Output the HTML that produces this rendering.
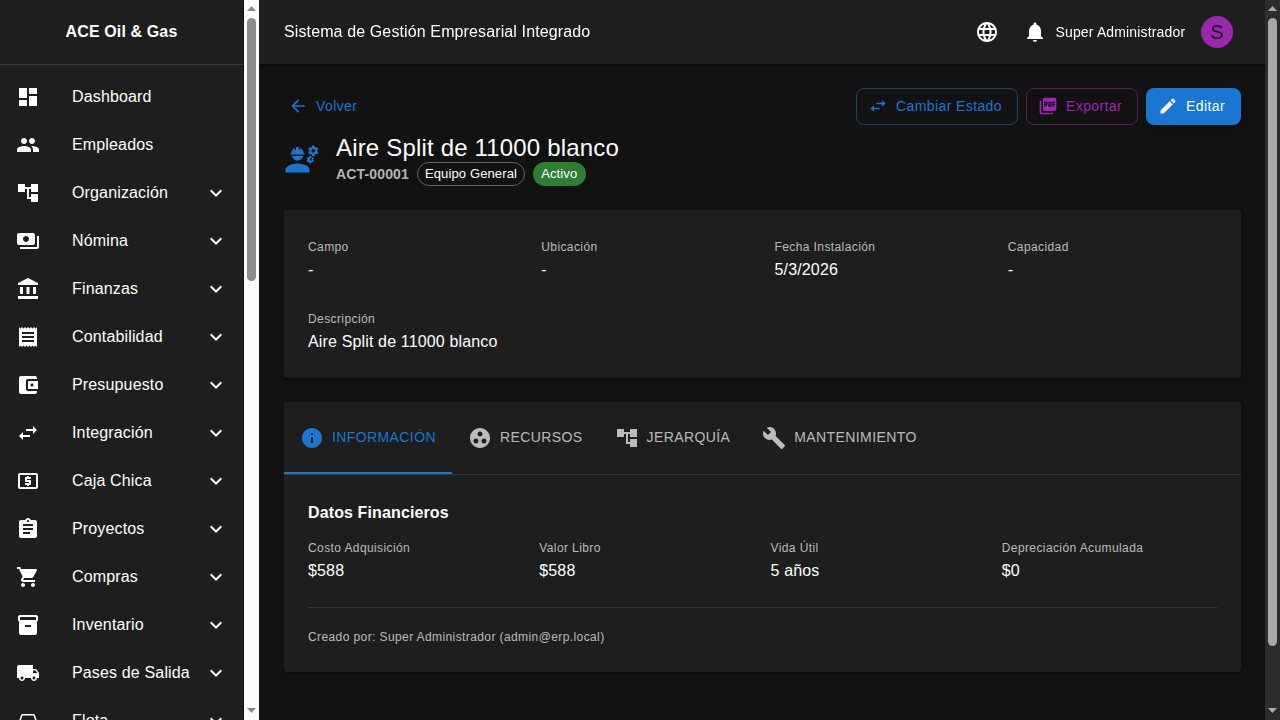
<!DOCTYPE html>
<html>
<head>
<meta charset="utf-8">
<style>
*{box-sizing:border-box;margin:0;padding:0}
html,body{width:1280px;height:720px;overflow:hidden;background:#121212;font-family:"Liberation Sans",sans-serif;color:#fff}
svg{display:block;fill:currentColor}
.abs{position:absolute}
/* sidebar */
#side{position:absolute;left:0;top:0;width:243px;height:720px;background:#1e1e1e;overflow:hidden}
#side .brand{position:absolute;left:0;top:0;width:243px;height:64px;font-weight:700;font-size:16px;line-height:64px;text-align:center;letter-spacing:0.12px}
#side .div{position:absolute;left:0;top:64px;width:243px;height:1px;background:#3b3b3b}
.item{position:absolute;left:0;width:243px;height:48px}
.item svg.ic{position:absolute;left:16px;top:12px;width:24px;height:24px}
.item .tx{position:absolute;left:72px;top:12px;font-size:16px;line-height:24px;letter-spacing:0.15px;white-space:nowrap}
.item svg.ch{position:absolute;left:204px;top:12px;width:24px;height:24px}
/* scrollbars */
#sb1{position:absolute;left:243px;top:0;width:16px;height:720px;background:#101010}
#sb1 .tr{position:absolute;left:1px;top:0;width:15px;height:720px;background:#fcfcfc}
#sb1 .th{position:absolute;left:4px;top:18px;width:9px;height:263px;background:#8c8c8c;border-radius:5px}
#sb2{position:absolute;left:1265px;top:0;width:15px;height:720px;background:#2c2c2c}
#sb2 .th{position:absolute;left:3px;top:18px;width:9px;height:628px;background:#a8a8a8;border-radius:5px}
/* appbar */
#bar{position:absolute;left:259px;top:0;width:1006px;height:64px;background:#1e1e1e;will-change:transform}
.cap{font-size:12px;line-height:19.92px;letter-spacing:0.4px;color:rgba(255,255,255,0.7);white-space:nowrap}
.val{font-size:16px;line-height:24px;letter-spacing:0.15px;color:#fff;white-space:nowrap}
.paper{position:absolute;background:#1e1e1e;border-radius:4px;box-shadow:0 2px 1px -1px rgba(0,0,0,0.2),0 1px 1px 0 rgba(0,0,0,0.14),0 1px 3px 0 rgba(0,0,0,0.12)}
.btn{position:absolute;height:36.5px;border-radius:8px;font-size:14px;letter-spacing:0.4px;line-height:24.5px;white-space:nowrap}
.btn svg{position:absolute;width:20px;height:20px;top:8px}
.btn span{position:absolute;top:6px}
.tab{position:absolute;top:0;height:72px;font-size:14px;letter-spacing:0.4px;line-height:24.5px;white-space:nowrap;color:rgba(255,255,255,0.7)}
.tab svg{position:absolute;top:24px;width:24px;height:24px}
.tab span{position:absolute;top:24px}
</style>
</head>
<body>
<div id="side">
  <div class="brand">ACE Oil &amp; Gas</div>
  <div class="div"></div>
  <!-- items inserted -->
  <div class="item" style="top:73px"><svg class="ic" viewBox="0 0 24 24"><path d="M3 13h8V3H3v10zm0 8h8v-6H3v6zm10 0h8V11h-8v10zm0-18v6h8V3h-8z"/></svg><div class="tx">Dashboard</div></div>
  <div class="item" style="top:121px"><svg class="ic" viewBox="0 0 24 24"><path d="M16 11c1.66 0 2.99-1.34 2.99-3S17.66 5 16 5c-1.66 0-3 1.34-3 3s1.34 3 3 3zm-8 0c1.66 0 2.99-1.34 2.99-3S9.66 5 8 5C6.34 5 5 6.34 5 8s1.34 3 3 3zm0 2c-2.33 0-7 1.17-7 3.5V19h14v-2.5c0-2.33-4.67-3.5-7-3.5zm8 0c-.29 0-.62.02-.97.05 1.16.84 1.97 1.97 1.97 3.45V19h6v-2.5c0-2.33-4.67-3.5-7-3.5z"/></svg><div class="tx">Empleados</div></div>
  <div class="item" style="top:169px"><svg class="ic" viewBox="0 0 24 24"><path d="M22 11V3h-7v3H9V3H2v8h7V8h2v10h4v3h7v-8h-7v3h-2V8h2v3z"/></svg><div class="tx">Organización</div><svg class="ch" viewBox="0 0 24 24"><path d="M16.59 8.59L12 13.17 7.41 8.59 6 10l6 6 6-6z"/></svg></div>
  <div class="item" style="top:217px"><svg class="ic" viewBox="0 0 24 24"><path d="M19 14V6c0-1.1-.9-2-2-2H3c-1.1 0-2 .9-2 2v8c0 1.1.9 2 2 2h14c1.1 0 2-.9 2-2zm-9-1c-1.66 0-3-1.34-3-3s1.34-3 3-3 3 1.34 3 3-1.34 3-3 3zm13-6v11c0 1.1-.9 2-2 2H4v-2h17V7h2z"/></svg><div class="tx">Nómina</div><svg class="ch" viewBox="0 0 24 24"><path d="M16.59 8.59L12 13.17 7.41 8.59 6 10l6 6 6-6z"/></svg></div>
  <div class="item" style="top:265px"><svg class="ic" viewBox="0 0 24 24"><path d="M4 10h3v7H4zm6.5 0h3v7h-3zM2 19h20v3H2zm15-9h3v7h-3zm-5-9L2 6v2h20V6z"/></svg><div class="tx">Finanzas</div><svg class="ch" viewBox="0 0 24 24"><path d="M16.59 8.59L12 13.17 7.41 8.59 6 10l6 6 6-6z"/></svg></div>
  <div class="item" style="top:313px"><svg class="ic" viewBox="0 0 24 24"><path d="M18 17H6v-2h12v2zm0-4H6v-2h12v2zm0-4H6V7h12v2zM3 22l1.5-1.5L6 22l1.5-1.5L9 22l1.5-1.5L12 22l1.5-1.5L15 22l1.5-1.5L18 22l1.5-1.5L21 22V2l-1.5 1.5L18 2l-1.5 1.5L15 2l-1.5 1.5L12 2l-1.5 1.5L9 2 7.5 3.5 6 2 4.5 3.5 3 2v20z"/></svg><div class="tx">Contabilidad</div><svg class="ch" viewBox="0 0 24 24"><path d="M16.59 8.59L12 13.17 7.41 8.59 6 10l6 6 6-6z"/></svg></div>
  <div class="item" style="top:361px"><svg class="ic" viewBox="0 0 24 24"><path d="M21 18v1c0 1.1-.9 2-2 2H5c-1.11 0-2-.9-2-2V5c0-1.1.89-2 2-2h14c1.1 0 2 .9 2 2v1h-9c-1.11 0-2 .9-2 2v8c0 1.1.89 2 2 2h9zm-9-2h10V8H12v8zm4-2.5c-.83 0-1.5-.67-1.5-1.5s.67-1.5 1.5-1.5 1.5.67 1.5 1.5-.67 1.5-1.5 1.5z"/></svg><div class="tx">Presupuesto</div><svg class="ch" viewBox="0 0 24 24"><path d="M16.59 8.59L12 13.17 7.41 8.59 6 10l6 6 6-6z"/></svg></div>
  <div class="item" style="top:409px"><svg class="ic" viewBox="0 0 24 24"><path d="M6.99 11L3 15l3.99 4v-3H14v-2H6.99v-3zM21 9l-3.99-4v3H10v2h7.01v3L21 9z"/></svg><div class="tx">Integración</div><svg class="ch" viewBox="0 0 24 24"><path d="M16.59 8.59L12 13.17 7.41 8.59 6 10l6 6 6-6z"/></svg></div>
  <div class="item" style="top:457px"><svg class="ic" viewBox="0 0 24 24"><path d="M11 17h2v-1h1c.55 0 1-.45 1-1v-3c0-.55-.45-1-1-1h-3v-1h4V8h-2V7h-2v1h-1c-.55 0-1 .45-1 1v3c0 .55.45 1 1 1h3v1H9v2h2v1zm9-13H4c-1.11 0-1.99.89-1.99 2L2 18c0 1.11.89 2 2 2h16c1.11 0 2-.89 2-2V6c0-1.11-.89-2-2-2zm0 14H4V6h16v12z"/></svg><div class="tx">Caja Chica</div><svg class="ch" viewBox="0 0 24 24"><path d="M16.59 8.59L12 13.17 7.41 8.59 6 10l6 6 6-6z"/></svg></div>
  <div class="item" style="top:505px"><svg class="ic" viewBox="0 0 24 24"><path d="M19 3h-4.18C14.4 1.84 13.3 1 12 1c-1.3 0-2.4.84-2.82 2H5c-1.1 0-2 .9-2 2v14c0 1.1.9 2 2 2h14c1.1 0 2-.9 2-2V5c0-1.1-.9-2-2-2zm-7 0c.55 0 1 .45 1 1s-.45 1-1 1-1-.45-1-1 .45-1 1-1zm2 14H7v-2h7v2zm3-4H7v-2h10v2zm0-4H7V7h10v2z"/></svg><div class="tx">Proyectos</div><svg class="ch" viewBox="0 0 24 24"><path d="M16.59 8.59L12 13.17 7.41 8.59 6 10l6 6 6-6z"/></svg></div>
  <div class="item" style="top:553px"><svg class="ic" viewBox="0 0 24 24"><path d="M7 18c-1.1 0-1.99.9-1.99 2S5.9 22 7 22s2-.9 2-2-.9-2-2-2zM1 2v2h2l3.6 7.59-1.35 2.45c-.16.28-.25.61-.25.96 0 1.1.9 2 2 2h12v-2H7.42c-.14 0-.25-.11-.25-.25l.03-.12.9-1.63h7.45c.75 0 1.41-.41 1.75-1.03l3.58-6.49c.08-.14.12-.31.12-.48 0-.55-.45-1-1-1H5.21l-.94-2H1zm16 16c-1.1 0-1.99.9-1.99 2s.89 2 1.99 2 2-.9 2-2-.9-2-2-2z"/></svg><div class="tx">Compras</div><svg class="ch" viewBox="0 0 24 24"><path d="M16.59 8.59L12 13.17 7.41 8.59 6 10l6 6 6-6z"/></svg></div>
  <div class="item" style="top:601px"><svg class="ic" viewBox="0 0 24 24"><path d="M20 2H4c-1 0-2 .9-2 2v3.01c0 .72.43 1.34 1 1.69V20c0 1.1 1.1 2 2 2h14c.9 0 2-.9 2-2V8.7c.57-.35 1-.97 1-1.69V4c0-1.1-1-2-2-2zm-5 12H9v-2h6v2zm5-7H4V4l16-.02V7z"/></svg><div class="tx">Inventario</div><svg class="ch" viewBox="0 0 24 24"><path d="M16.59 8.59L12 13.17 7.41 8.59 6 10l6 6 6-6z"/></svg></div>
  <div class="item" style="top:649px"><svg class="ic" viewBox="0 0 24 24"><path d="M20 8h-3V4H3c-1.1 0-2 .9-2 2v11h2c0 1.66 1.34 3 3 3s3-1.34 3-3h6c0 1.66 1.34 3 3 3s3-1.34 3-3h2v-5l-3-4zM6 18.5c-.83 0-1.5-.67-1.5-1.5s.67-1.5 1.5-1.5 1.5.67 1.5 1.5-.67 1.5-1.5 1.5zm13.5-9l1.96 2.5H17V9.5h2.5zm-1.5 9c-.83 0-1.5-.67-1.5-1.5s.67-1.5 1.5-1.5 1.5.67 1.5 1.5-.67 1.5-1.5 1.5z"/></svg><div class="tx">Pases de Salida</div><svg class="ch" viewBox="0 0 24 24"><path d="M16.59 8.59L12 13.17 7.41 8.59 6 10l6 6 6-6z"/></svg></div>
  <div class="item" style="top:697px"><svg class="ic" viewBox="0 0 24 24"><path d="M18.92 6.01C18.72 5.42 18.16 5 17.5 5h-11c-.66 0-1.21.42-1.42 1.01L3 12v8c0 .55.45 1 1 1h1c.55 0 1-.45 1-1v-1h12v1c0 .55.45 1 1 1h1c.55 0 1-.45 1-1v-8l-2.08-5.99zM6.5 16c-.83 0-1.5-.67-1.5-1.5S5.67 13 6.5 13s1.5.67 1.5 1.5S7.33 16 6.5 16zm11 0c-.83 0-1.5-.67-1.5-1.5s.67-1.5 1.5-1.5 1.5.67 1.5 1.5-.67 1.5-1.5 1.5zM5 11l1.5-4.5h11L19 11H5z"/></svg><div class="tx">Flota</div><svg class="ch" viewBox="0 0 24 24"><path d="M16.59 8.59L12 13.17 7.41 8.59 6 10l6 6 6-6z"/></svg></div>
</div>
<div id="sb1"><div class="tr"></div>
  <svg class="abs" style="left:4px;top:6px;width:9px;height:5px" viewBox="0 0 9 5"><path d="M4.5 0L9 5H0z" fill="#8c8c8c"/></svg>
  <div class="th"></div>
  <svg class="abs" style="left:4px;top:708px;width:9px;height:5px" viewBox="0 0 9 5"><path d="M0 0H9L4.5 5z" fill="#8c8c8c"/></svg>
</div>

<div class="abs" style="left:259px;top:64px;width:1px;height:656px;background:#161616"></div>
<div id="bar">
  <div class="abs" style="left:25px;top:20px;font-size:16px;line-height:24px;letter-spacing:0.12px;white-space:nowrap">Sistema de Gestión Empresarial Integrado</div>
  <svg class="abs" style="left:716px;top:20px;width:24px;height:24px" viewBox="0 0 24 24"><path d="M11.99 2C6.47 2 2 6.48 2 12s4.47 10 9.99 10C17.52 22 22 17.52 22 12S17.52 2 11.99 2zm6.93 6h-2.95c-.32-1.25-.78-2.45-1.38-3.56 1.84.63 3.370 1.91 4.33 3.56zM12 4.04c.83 1.2 1.48 2.53 1.91 3.96h-3.82c.43-1.43 1.08-2.76 1.91-3.960zM4.26 14C4.1 13.36 4 12.69 4 12s.1-1.36.26-2h3.38c-.08.66-.14 1.32-.14 2s.06 1.34.14 2H4.26zm.82 2h2.95c.32 1.25.78 2.45 1.38 3.56-1.84-.63-3.37-1.9-4.33-3.56zm2.95-8H5.08c.96-1.66 2.49-2.93 4.33-3.56C8.81 5.55 8.35 6.75 8.03 8zM12 19.96c-.83-1.2-1.48-2.53-1.91-3.96h3.82c-.43 1.43-1.08 2.76-1.91 3.96zM14.34 14H9.66c-.09-.66-.16-1.32-.16-2s.07-1.35.16-2h4.68c.09.65.16 1.32.16 2s-.07 1.34-.16 2zm.25 5.56c.6-1.11 1.06-2.31 1.38-3.56h2.95c-.96 1.65-2.49 2.93-4.33 3.56zM16.36 14c.08-.66.14-1.32.14-2s-.06-1.34-.14-2h3.38c.16.64.26 1.31.26 2s-.1 1.36-.26 2h-3.38z"/></svg>
  <svg class="abs" style="left:764px;top:20px;width:24px;height:24px" viewBox="0 0 24 24"><path d="M12 22c1.1 0 2-.9 2-2h-4c0 1.1.89 2 2 2zm6-6v-5c0-3.07-1.64-5.64-4.5-6.32V4c0-.83-.67-1.5-1.5-1.5s-1.5.67-1.5 1.5v.68C7.63 5.36 6 7.92 6 11v5l-2 2v1h16v-1l-2-2z"/></svg>
  <div class="abs" style="left:796.5px;top:21.5px;font-size:14px;line-height:20px;letter-spacing:0.15px;white-space:nowrap">Super Administrador</div>
  <div class="abs" style="left:942px;top:16px;width:32px;height:32px;border-radius:50%;background:#9c27b0;color:#121212;font-size:20px;line-height:32px;text-align:center">S</div>
</div>
<div class="abs" style="left:259px;top:64px;width:1006px;height:1px;background:#0b0b0b"></div><div class="abs" style="left:259px;top:65px;width:1006px;height:1px;background:#0d0d0d"></div><div class="abs" style="left:259px;top:66px;width:1006px;height:1px;background:#0f0f0f"></div><div class="abs" style="left:259px;top:67px;width:1006px;height:1px;background:#111"></div>
<div id="sb2">
  <svg class="abs" style="left:3px;top:6px;width:9px;height:5px" viewBox="0 0 9 5"><path d="M4.5 0L9 5H0z" fill="#a8a8a8"/></svg>
  <div class="th"></div>
  <svg class="abs" style="left:3px;top:708px;width:9px;height:5px" viewBox="0 0 9 5"><path d="M0 0H9L4.5 5z" fill="#a8a8a8"/></svg>
</div>

<!-- top row buttons -->
<div class="btn" style="left:284px;top:88px;width:81px;color:#1976d2">
  <svg style="left:4px" viewBox="0 0 24 24"><path d="M20 11H7.83l5.59-5.59L12 4l-8 8 8 8 1.41-1.41L7.83 13H20v-2z"/></svg>
  <span style="left:32px">Volver</span>
</div>
<div class="btn" style="left:856px;top:88px;width:162px;color:#1976d2;border:1px solid rgba(25,118,210,0.5)">
  <svg style="left:11px;top:7px" viewBox="0 0 24 24"><path d="M6.99 11L3 15l3.99 4v-3H14v-2H6.99v-3zM21 9l-3.99-4v3H10v2h7.01v3L21 9z"/></svg>
  <span style="left:39px;top:5px">Cambiar Estado</span>
</div>
<div class="btn" style="left:1026px;top:88px;width:112px;color:#9c27b0;border:1px solid rgba(156,39,176,0.5)">
  <svg style="left:11px;top:7px" viewBox="0 0 24 24"><path d="M20 2H8c-1.1 0-2 .9-2 2v12c0 1.1.9 2 2 2h12c1.1 0 2-.9 2-2V4c0-1.1-.9-2-2-2zm-8.5 7.5c0 .83-.67 1.5-1.5 1.5H9v2H7.5V7H10c.83 0 1.5.67 1.5 1.5v1zm5 2c0 .83-.67 1.5-1.5 1.5h-2.5V7H15c.83 0 1.5.67 1.5 1.5v3zm4-3H19v1h1.5V11H19v2h-1.5V7h3v1.5zM9 9.5h1v-1H9v1zM4 6H2v14c0 1.1.9 2 2 2h14v-2H4V6zm10 5.5h1v-3h-1v3z"/></svg>
  <span style="left:39px;top:5px">Exportar</span>
</div>
<div class="btn" style="left:1146px;top:88px;width:95px;color:#fff;background:#1976d2;box-shadow:0 3px 1px -2px rgba(0,0,0,0.2),0 2px 2px 0 rgba(0,0,0,0.14),0 1px 5px 0 rgba(0,0,0,0.12)">
  <svg style="left:12px" viewBox="0 0 24 24"><path d="M3 17.25V21h3.75L17.81 9.94l-3.75-3.75L3 17.25zM20.71 7.04c.39-.39.39-1.02 0-1.41l-2.34-2.34a.9959.9959 0 0 0-1.41 0l-1.83 1.83 3.75 3.75 1.83-1.83z"/></svg>
  <span style="left:40px">Editar</span>
</div>

<!-- header -->
<svg class="abs" style="left:284px;top:141px;width:36px;height:36px;color:#1976d2" viewBox="0 0 24 24"><path d="M9 15c-2.67 0-8 1.34-8 4v2h16v-2c0-2.66-5.33-4-8-4zm13.1-8.16c.01-.11.02-.22.02-.34 0-.12-.01-.23-.03-.34l.74-.58c.07-.05.08-.15.04-.22l-.7-1.21c-.04-.08-.14-.1-.21-.08l-.86.35c-.18-.14-.38-.25-.59-.34l-.13-.93c-.02-.09-.09-.15-.18-.15h-1.4c-.09 0-.16.06-.17.15l-.13.93c-.21.09-.41.21-.59.34l-.87-.35c-.08-.03-.17 0-.21.08l-.7 1.21c-.04.08-.03.17.04.22l.74.58c-.02.11-.03.23-.03.34 0 .11.01.23.03.34l-.74.58c-.07.05-.08.15-.04.22l.7 1.21c.04.08.14.1.21.08l.87-.35c.18.14.38.25.59.34l.13.93c.01.09.08.15.17.15h1.4c.09 0 .16-.06.17-.15l.13-.93c.21-.09.41-.21.59-.34l.87.35c.08.03.17 0 .21-.08l.7-1.21c.04-.08.03-.17-.04-.22l-.73-.58zm-2.6.91c-.69 0-1.25-.56-1.25-1.25s.56-1.25 1.25-1.25 1.25.56 1.25 1.25-.56 1.25-1.25 1.25zm.42 3.930l-.5-.87c-.03-.06-.1-.08-.15-.06l-.62.25c-.13-.1-.27-.18-.42-.24l-.09-.66c-.02-.06-.08-.1-.14-.1h-1c-.06 0-.11.04-.12.11l-.09.66c-.15.06-.29.15-.42.24l-.62-.25c-.06-.02-.12 0-.15.06l-.5.87c-.03.06-.02.12.03.16l.53.41c-.01.08-.02.16-.02.24 0 .08.01.17.02.24l-.53.41c-.05.04-.06.11-.03.16l.5.87c.03.06.1.08.15.06l.62-.25c.13.1.27.18.42.24l.09.66c.01.07.06.11.12.11h1c.06 0 .12-.04.12-.11l.09-.66c.15-.06.29-.15.42-.24l.62.25c.06.02.12 0 .15-.06l.5-.87c.03-.06.02-.12-.03-.16l-.52-.41c.01-.08.02-.16.02-.24 0-.08-.01-.17-.02-.24l.53-.41c.05-.04.06-.11.04-.17zm-1.82 1.35c-.41 0-.75-.34-.75-.75s.34-.75.75-.75.75.34.75.75-.34.75-.75.75zM4.74 9h8.53c.27 0 .49-.22.49-.49v-.02c0-.27-.22-.49-.49-.49H13c0-1.48-.81-2.75-2-3.45v.95c0 .28-.22.5-.5.5s-.5-.22-.5-.5V4.14C9.68 4.06 9.35 4 9 4s-.68.06-1 .14V5.5c0 .28-.22.5-.5.5S7 5.78 7 5.5v-.95C5.81 5.25 5 6.52 5 8h-.26c-.27 0-.49.22-.49.49v.03c0 .26.22.48.49.48zM9 13c1.86 0 3.41-1.28 3.86-3H5.14c.45 1.72 2 3 3.86 3z"/></svg>
<div class="abs" style="left:336px;top:132.5px;font-size:24px;line-height:29.64px;letter-spacing:0.176px;white-space:nowrap">Aire Split de 11000 blanco</div>
<div class="abs" style="left:336px;top:164px;font-size:14px;line-height:20px;font-weight:700;letter-spacing:0.15px;color:rgba(255,255,255,0.7);white-space:nowrap">ACT-00001</div>
<div class="abs" style="left:417px;top:162px;width:108px;height:24px;border:1px solid #616161;border-radius:12px;font-size:13px;line-height:22px;letter-spacing:0.122px;text-align:center;white-space:nowrap">Equipo General</div>
<div class="abs" style="left:533px;top:162px;width:52.5px;height:24px;background:#2e7d32;border-radius:12px;font-size:13px;line-height:24px;letter-spacing:0.122px;text-align:center;white-space:nowrap">Activo</div>

<!-- paper 1 -->
<div class="paper" style="left:284px;top:210px;width:957px;height:168px">
  <div class="abs cap" style="left:24px;top:28px">Campo</div>
  <div class="abs val" style="left:24px;top:47.92px">-</div>
  <div class="abs cap" style="left:257.25px;top:28px">Ubicación</div>
  <div class="abs val" style="left:257.25px;top:47.92px">-</div>
  <div class="abs cap" style="left:490.5px;top:28px">Fecha Instalación</div>
  <div class="abs val" style="left:490.5px;top:47.92px">5/3/2026</div>
  <div class="abs cap" style="left:723.75px;top:28px">Capacidad</div>
  <div class="abs val" style="left:723.75px;top:47.92px">-</div>
  <div class="abs cap" style="left:24px;top:100px">Descripción</div>
  <div class="abs val" style="left:24px;top:119.92px">Aire Split de 11000 blanco</div>
</div>

<!-- paper 2 -->
<div class="paper" style="left:284px;top:402px;width:957px;height:270px">
  <div class="abs" style="left:0;top:72px;width:957px;height:1px;background:rgba(255,255,255,0.12)"></div>
  <div class="tab" style="left:0;width:168px;color:#1976d2">
    <svg style="left:16px" viewBox="0 0 24 24"><path d="M12 2C6.48 2 2 6.48 2 12s4.48 10 10 10 10-4.48 10-10S17.52 2 12 2zm1 15h-2v-6h2v6zm0-8h-2V7h2v2z"/></svg>
    <span style="left:48px;top:23px">INFORMACIÓN</span>
  </div>
  <div class="abs" style="left:0;top:70px;width:168px;height:2px;background:#1976d2"></div>
  <div class="tab" style="left:168px;width:146.55px">
    <svg style="left:16px" viewBox="0 0 24 24"><path d="M12 2C6.48 2 2 6.48 2 12s4.48 10 10 10 10-4.48 10-10S17.52 2 12 2zM8 17.5c-1.38 0-2.5-1.12-2.5-2.5s1.12-2.5 2.5-2.5 2.5 1.12 2.5 2.5-1.12 2.5-2.5 2.5zM9.5 8c0-1.38 1.12-2.5 2.5-2.5s2.5 1.12 2.5 2.5-1.12 2.5-2.5 2.5S9.5 9.38 9.5 8zm6.5 9.5c-1.38 0-2.5-1.12-2.5-2.5s1.12-2.5 2.5-2.5 2.5 1.12 2.5 2.5-1.12 2.5-2.5 2.5z"/></svg>
    <span style="left:48px;top:23px">RECURSOS</span>
  </div>
  <div class="tab" style="left:314.5px;width:147.73px">
    <svg style="left:16px" viewBox="0 0 24 24"><path d="M22 11V3h-7v3H9V3H2v8h7V8h2v10h4v3h7v-8h-7v3h-2V8h2v3z"/></svg>
    <span style="left:48px;top:23px">JERARQUÍA</span>
  </div>
  <div class="tab" style="left:462.3px;width:186.4px">
    <svg style="left:16px" viewBox="0 0 24 24"><path d="M22.7 19l-9.1-9.1c.9-2.3.4-5-1.5-6.9-2-2-5-2.4-7.4-1.3L9 6 6 9 1.6 4.7C.4 7.1.9 10.1 2.9 12.1c1.9 1.9 4.6 2.4 6.9 1.5l9.1 9.1c.4.4 1 .4 1.4 0l2.3-2.3c.5-.4.5-1.1.1-1.4z"/></svg>
    <span style="left:48px;top:23px">MANTENIMIENTO</span>
  </div>
  <div class="abs" style="left:24px;top:98px;font-size:16px;line-height:25.6px;font-weight:700;letter-spacing:0.12px;white-space:nowrap">Datos Financieros</div>
  <div class="abs cap" style="left:24px;top:136.7px">Costo Adquisición</div>
  <div class="abs val" style="left:24px;top:156.62px">$588</div>
  <div class="abs cap" style="left:255.25px;top:136.7px">Valor Libro</div>
  <div class="abs val" style="left:255.25px;top:156.62px">$588</div>
  <div class="abs cap" style="left:486.5px;top:136.7px">Vida Útil</div>
  <div class="abs val" style="left:486.5px;top:156.62px">5 años</div>
  <div class="abs cap" style="left:717.75px;top:136.7px">Depreciación Acumulada</div>
  <div class="abs val" style="left:717.75px;top:156.62px">$0</div>
  <div class="abs" style="left:24px;top:205px;width:909px;height:1px;background:rgba(255,255,255,0.12)"></div>
  <div class="abs cap" style="left:24px;top:226.4px">Creado por: Super Administrador (admin@erp.local)</div>
</div>

</body>
</html>
